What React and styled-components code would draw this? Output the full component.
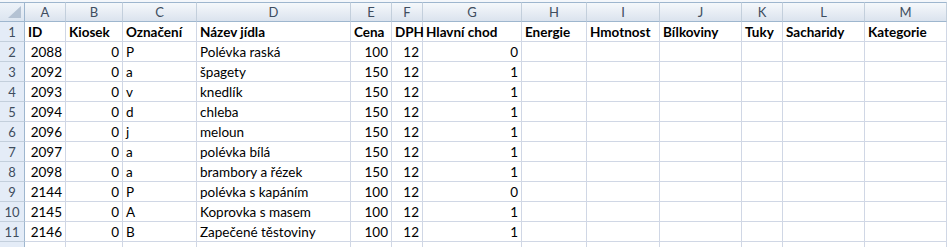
import React from "react";
import styled, { createGlobalStyle } from "styled-components";

const Global = createGlobalStyle`
  html, body { margin: 0; padding: 0; background: #ffffff; overflow: hidden; height: 247px; }
  * { box-sizing: border-box; }
`;

const COLS = [41, 57, 74, 154, 41, 31, 99, 65, 73, 82, 41, 82, 82];
const LETTERS = ["A", "B", "C", "D", "E", "F", "G", "H", "I", "J", "K", "L", "M"];

const HEAD = ["ID", "Kiosek", "Označení", "Název jídla", "Cena", "DPH", "Hlavní chod", "Energie", "Hmotnost", "Bílkoviny", "Tuky", "Sacharidy", "Kategorie"];

const DATA = [
  [2088, 0, "P", "Polévka raská", 100, 12, 0],
  [2092, 0, "a", "špagety", 150, 12, 1],
  [2093, 0, "v", "knedlík", 150, 12, 1],
  [2094, 0, "d", "chleba", 150, 12, 1],
  [2096, 0, "j", "meloun", 150, 12, 1],
  [2097, 0, "a", "polévka bílá", 150, 12, 1],
  [2098, 0, "a", "brambory a řézek", 150, 12, 1],
  [2144, 0, "P", "polévka s kapáním", 100, 12, 0],
  [2145, 0, "A", "Koprovka s masem", 100, 12, 1],
  [2146, 0, "B", "Zapečené těstoviny", 100, 12, 1],
];

const Frame = styled.div`
  padding-top: 2px;
  background: #f4f7fb;
`;

const Sheet = styled.div`
  display: grid;
  grid-template-columns: 25px ${COLS.map((c) => c + "px").join(" ")};
  grid-template-rows: 20px;
  grid-auto-rows: 20px;
  font-family: "Lato", "Liberation Sans", sans-serif;
  font-size: 13.5px;
  color: #000;
  background: #fff;
`;

const Corner = styled.div`
  background: linear-gradient(#eef3f9, #dce5f0);
  border-top: 1px solid #9eb6ce;
  border-right: 1px solid #9eb6ce;
  border-bottom: 1px solid #9eb6ce;
  display: flex;
  align-items: flex-end;
  justify-content: flex-end;
  padding: 0 3px 3px 0;
`;

const ColHead = styled.div`
  background: linear-gradient(#f5f8fb, #dbe3ee);
  border-top: 1px solid #9eb6ce;
  border-right: 1px solid #c3cfdc;
  border-bottom: 1px solid #9eb6ce;
  color: #3e4d5e;
  text-align: center;
  line-height: 19px;
  font-size: 13px;
`;

const RowHead = styled.div`
  background: #e4ecf7;
  border-right: 1px solid #9eb6ce;
  border-bottom: 1px solid #c3cfdc;
  color: #3e4d5e;
  text-align: center;
  line-height: 20px;
  font-size: 13px;
`;

const Cell = styled.div`
  border-right: 1px solid #d0d7e5;
  border-bottom: 1px solid #d0d7e5;
  padding: 0 ${(p) => (p.$num ? "3px" : "2px")} 0 ${(p) => (p.$num ? "2px" : "3px")};
  text-align: ${(p) => (p.$num ? "right" : "left")};
  font-weight: ${(p) => (p.$bold ? 700 : 400)};
  line-height: 20px;
  white-space: nowrap;
`;

export default function App() {
  return (
    <>
      <Global />
      <Frame>
        <Sheet>
          <Corner>
            <svg width="13" height="12" viewBox="0 0 13 12">
              <polygon points="13,0 13,12 0,12" fill="#b4c2d3" />
            </svg>
          </Corner>
          {LETTERS.map((l) => (
            <ColHead key={l}>{l}</ColHead>
          ))}
          <RowHead>1</RowHead>
          {HEAD.map((h) => (
            <Cell key={h} $bold>
              {h}
            </Cell>
          ))}
          {DATA.map((row, ri) => (
            <React.Fragment key={ri}>
              <RowHead>{ri + 2}</RowHead>
              {COLS.map((_, ci) => {
                const v = row[ci];
                const num = typeof v === "number";
                return (
                  <Cell key={ci} $num={num}>
                    {v === undefined ? "" : v}
                  </Cell>
                );
              })}
            </React.Fragment>
          ))}
          <RowHead />
          {COLS.map((_, ci) => (
            <Cell key={"e" + ci} />
          ))}
        </Sheet>
      </Frame>
    </>
  );
}
